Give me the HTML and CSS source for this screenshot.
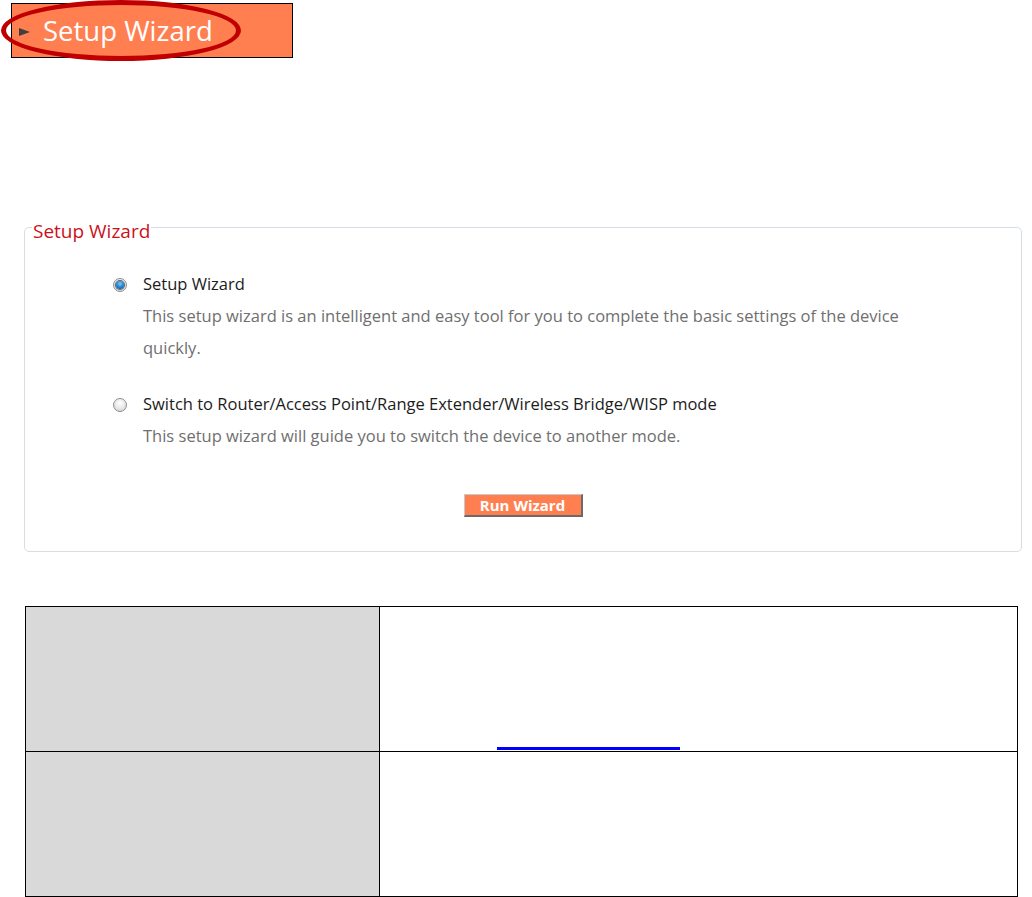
FILE: index.html
```html
<!DOCTYPE html>
<html lang="en">
<head>
<meta charset="utf-8">
<title>Setup Wizard</title>
<link rel="stylesheet" href="styles.css">
</head>
<body>
<div class="page">
  <div class="banner-wrap">
    <div class="banner">
      <span class="tri"></span>
      <span class="banner-title">Setup Wizard</span>
    </div>
    <span class="circle-mark"></span>
  </div>

  <fieldset class="wizard">
    <legend>Setup Wizard</legend>
    <div class="option">
      <span class="radio checked"></span>
      <div class="opt-body">
        <div class="opt-label">Setup Wizard</div>
        <div class="opt-desc">This setup wizard is an intelligent and easy tool for you to complete the basic settings of the device quickly.</div>
      </div>
    </div>
    <div class="option second">
      <span class="radio"></span>
      <div class="opt-body">
        <div class="opt-label">Switch to Router/Access Point/Range Extender/Wireless Bridge/WISP mode</div>
        <div class="opt-desc">This setup wizard will guide you to switch the device to another mode.</div>
      </div>
    </div>
    <div class="actions">
      <button class="run" type="button">Run Wizard</button>
    </div>
  </fieldset>

  <table class="info">
    <tr>
      <td class="key"></td>
      <td class="val link-cell"><a class="link-line" href="#"></a></td>
    </tr>
    <tr>
      <td class="key"></td>
      <td class="val"></td>
    </tr>
  </table>
</div>
</body>
</html>
```

FILE: styles.css
```css
* { box-sizing: border-box; }

body {
  margin: 0;
  background: #ffffff;
  font-family: "Open Sans", "DejaVu Sans", sans-serif;
}

.page {
  width: 1032px;
}

/* ---------- banner ---------- */
.banner-wrap {
  position: relative;
  height: 58px;
  padding: 3px 0 0 11px;
}

.banner {
  width: 282px;
  height: 55px;
  border: 1px solid #000;
  background: #ff7f50;
  display: flex;
  align-items: center;
  padding-left: 7px;
}

.tri {
  width: 0;
  height: 0;
  border-top: 4.5px solid transparent;
  border-bottom: 4.5px solid transparent;
  border-left: 11px solid #3f3f3f;
  margin-right: 13px;
  margin-top: 3px;
}

.banner-title {
  color: #ffffff;
  font-size: 27.5px;
  line-height: 30px;
}

.circle-mark {
  position: absolute;
  left: 1px;
  top: 0;
  width: 240px;
  height: 61px;
  border: 5px solid #c00000;
  border-radius: 50%;
}

/* ---------- fieldset ---------- */
.wizard {
  margin: 155px 0 0 24px;
  width: 998px;
  padding: 26px 0 34px 0;
  border: 1px solid #d6dde5;
  border-radius: 5px;
  min-width: 0;
}

.wizard legend {
  margin-left: 7px;
  padding: 7px 1px 0 1px;
  font-size: 19px;
  line-height: 22px;
  color: #cc1020;
}

.option {
  display: flex;
  align-items: flex-start;
  gap: 16px;
  padding-left: 88px;
}

.option.second {
  margin-top: 24px;
}

.radio {
  flex: none;
  position: relative;
  width: 14px;
  height: 14px;
  margin-top: 10px;
  border-radius: 50%;
  border: 1px solid #8c8f92;
  background: radial-gradient(circle at 50% 35%, #ffffff 0, #e6e6e6 55%, #c9c9c9 100%);
}

.radio.checked::after {
  content: "";
  position: absolute;
  left: 2px;
  top: 2px;
  width: 8px;
  height: 8px;
  border-radius: 50%;
  background: radial-gradient(circle at 50% 35%, #7fd0ff 0, #2a8ad6 45%, #0d4a86 100%);
  box-shadow: 0 0 0 1px #5b6670;
}

.opt-body {
  width: 790px;
}

.opt-label {
  font-size: 16.5px;
  line-height: 32px;
  color: #1c1c1c;
}

.opt-desc {
  font-size: 16.5px;
  line-height: 32px;
  color: #6f6f6f;
}

.actions {
  margin-top: 42px;
  display: flex;
  justify-content: center;
}

.run {
  width: 119px;
  height: 23px;
  padding: 0;
  background: #ff7f50;
  color: #ffffff;
  font-family: "Open Sans", "DejaVu Sans", sans-serif;
  font-weight: 700;
  font-size: 15px;
  line-height: 19px;
  border-style: solid;
  border-width: 1px 2px 2px 1px;
  border-color: #c9c9c9 #6a6a6a #6a6a6a #c9c9c9;
  cursor: pointer;
}

/* ---------- table ---------- */
.info {
  margin: 54px 0 0 25px;
  width: 993px;
  border-collapse: collapse;
}

.info td {
  height: 145px;
  border: 1px solid #000;
  padding: 0;
}

.info .key {
  width: 354px;
  background: #d9d9d9;
}

.info .val {
  background: #ffffff;
}

.link-cell {
  vertical-align: bottom;
}

.link-line {
  display: block;
  width: 183px;
  height: 3px;
  margin: 0 0 1px 117px;
  background: #0000ff;
}
```
